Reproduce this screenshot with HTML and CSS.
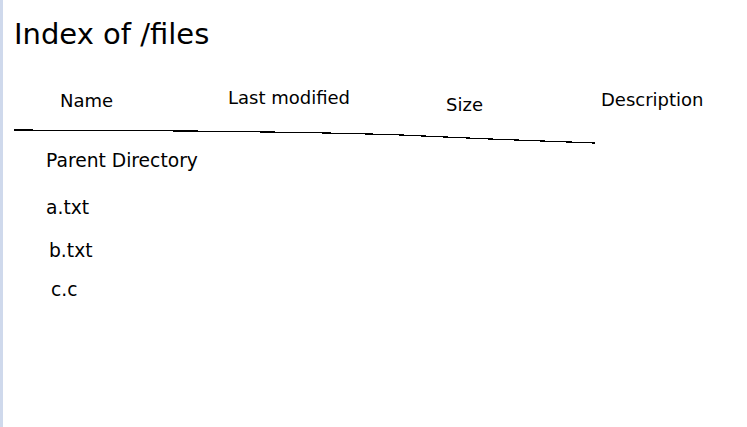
FILE: index.html
```html
<!DOCTYPE html>
<html lang="en">
<head>
    <meta charset="UTF-8">
    <meta name="viewport" content="width=device-width, initial-scale=1.0">
    <title>Index of /files</title>
    <link rel="stylesheet" href="styles.css">
</head>
<body>
    <div class="page">
        <h1 class="title">Index of /files</h1>

        <!-- Column headers -->
        <div class="headers">
            <div class="col col-name">Name</div>
            <div class="col col-modified">Last modified</div>
            <div class="col col-size">Size</div>
            <div class="col col-desc">Description</div>
        </div>

        <svg class="rule" width="600" height="22" viewBox="0 0 600 22">
            <polyline points="1,5 177,6 292,7.5 377,9.5 477,14 582,18" />
        </svg>

        <!-- File listing -->
        <ul class="listing">
            <li class="entry entry-parent">Parent Directory</li>
            <li class="entry entry-a">a.txt</li>
            <li class="entry entry-b">b.txt</li>
            <li class="entry entry-c">c.c</li>
        </ul>
    </div>
</body>
</html>
```

FILE: styles.css
```css
html, body {
    margin: 0;
    padding: 0;
    background-color: white;
}

body {
    font-family: "DejaVu Sans", Verdana, sans-serif;
    color: #000;
}

.page {
    min-height: 100vh;
    box-sizing: border-box;
    border-left: 3px solid #cfd9ec;
    padding-left: 10px;
    padding-top: 17px;
}

.title {
    margin: 0 0 0 1px;
    font-size: 29px;
    font-weight: normal;
    line-height: 34px;
}

.headers {
    display: grid;
    grid-template-columns: 168px 218px 155px auto;
    align-items: start;
    margin-top: 36px;
    padding-left: 47px;
    font-size: 18px;
    line-height: 21px;
}

.col-name {
    padding-top: 3px;
}

.col-modified {
    padding-top: 0;
}

.col-size {
    padding-top: 7px;
}

.col-desc {
    padding-top: 2px;
}

.rule {
    display: block;
    margin-top: 10px;
}

.rule polyline {
    fill: none;
    stroke: #000;
    stroke-width: 1.2;
    shape-rendering: crispEdges;
}

.listing {
    list-style: none;
    margin: 3px 0 0 0;
    padding: 0;
    font-size: 18.7px;
    line-height: 21px;
}

.entry-parent {
    margin-left: 33px;
}

.entry-a {
    margin-top: 26px;
    margin-left: 33px;
}

.entry-b {
    margin-top: 22px;
    margin-left: 36px;
}

.entry-c {
    margin-top: 18px;
    margin-left: 38px;
}
```
